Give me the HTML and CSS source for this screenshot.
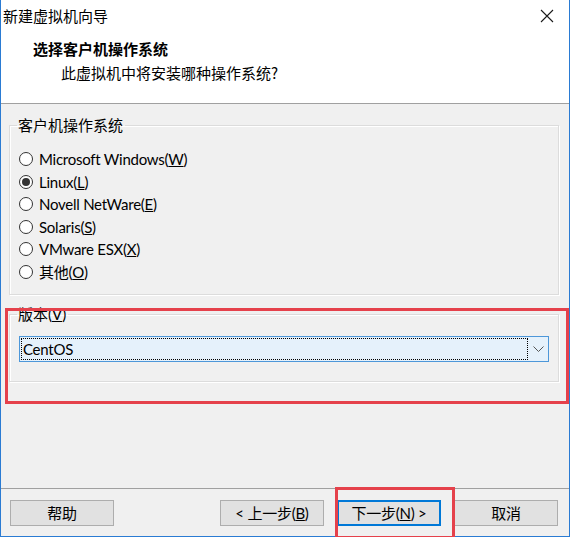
FILE: index.html
```html
<!DOCTYPE html>
<html lang="zh-CN">
<head>
<meta charset="utf-8">
<title>新建虚拟机向导</title>
<link rel="stylesheet" href="styles.css">
</head>
<body>
<div class="window">
  <div class="titlebar">
    <span class="title">新建虚拟机向导</span>
    <span class="close">
      <svg width="14" height="14" viewBox="0 0 14 14"><path d="M1 1 L13 13 M13 1 L1 13" stroke="#1a1a1a" stroke-width="1.1" fill="none"/></svg>
    </span>
  </div>
  <div class="header">
    <div class="h-title">选择客户机操作系统</div>
    <div class="h-sub">此虚拟机中将安装哪种操作系统?</div>
  </div>
  <div class="content">
    <fieldset class="group os-group">
      <legend>客户机操作系统</legend>
      <div class="radios">
        <label class="radio"><span class="dot"></span>Microsoft Windows(<u>W</u>)</label>
        <label class="radio checked"><span class="dot"></span>Linux(<u>L</u>)</label>
        <label class="radio"><span class="dot"></span>Novell NetWare(<u>E</u>)</label>
        <label class="radio"><span class="dot"></span>Solaris(<u>S</u>)</label>
        <label class="radio"><span class="dot"></span>VMware ESX(<u>X</u>)</label>
        <label class="radio"><span class="dot"></span>其他(<u>O</u>)</label>
      </div>
    </fieldset>
    <fieldset class="group ver-group">
      <legend>版本(<u>V</u>)</legend>
      <div class="combo">
        <span class="combo-text"><span class="focus">CentOS</span></span>
        <span class="combo-arrow">
          <svg width="11" height="7" viewBox="0 0 11 7"><path d="M0.5 0.5 L5.5 5.5 L10.5 0.5" stroke="#555" stroke-width="1" fill="none"/></svg>
        </span>
      </div>
    </fieldset>
    <div class="hl hl-version"></div>
  </div>
  <div class="footer">
    <button class="btn">帮助</button>
    <div class="spacer"></div>
    <button class="btn">&lt; 上一步(<u>B</u>)</button>
    <button class="btn default">下一步(<u>N</u>) &gt;</button>
    <button class="btn">取消</button>
    <div class="hl hl-next"></div>
  </div>
</div>
</body>
</html>
```

FILE: styles.css
```css
* { box-sizing: border-box; }
html, body { margin: 0; padding: 0; }
body {
  width: 570px;
  height: 537px;
  font-family: "Noto Sans CJK SC", sans-serif;
  font-size: 15px;
  color: #000;
  background: #fff;
}
.window {
  position: relative;
  width: 570px;
  height: 537px;
  border-left: 1px solid #2a7bd3;
  border-right: 1px solid #2a7bd3;
  border-bottom: 1px solid #2a7bd3;
  display: flex;
  flex-direction: column;
  background: #f0f0f0;
}
.titlebar {
  height: 31px;
  background: #fff;
  display: flex;
  align-items: center;
  justify-content: space-between;
  padding: 0 15px 0 2px;
}
.title {
  font-size: 15px;
  line-height: 20px;
}
.close { display: flex; }
.header {
  height: 73px;
  background: #fff;
  border-bottom: 1px solid #a0a0a0;
  padding: 8px 0 0 32px;
}
.h-title {
  font-weight: bold;
  font-size: 15px;
  line-height: 20px;
}
.h-sub {
  font-size: 15px;
  line-height: 20px;
  margin-top: 4px;
  padding-left: 28px;
}
.content {
  position: relative;
  flex: 1;
  padding: 11px 0 0 8px;
}
.group {
  margin: 0;
  width: 550px;
  border: 1px solid #dcdcdc;
  box-shadow: inset 1px 1px 0 #fff, 1px 1px 0 #fff;
  padding: 0;
}
.group legend {
  margin-left: 7px;
  padding: 0 2px 0 1px;
  font-size: 15px;
  line-height: 20px;
}
.radio, .btn, .combo, .group legend {
  font-family: Lato, "Noto Sans CJK SC", sans-serif;
}
.radio, .btn, .combo {
  letter-spacing: -0.25px;
}
.os-group { height: 180px; }
.radios {
  display: flex;
  flex-direction: column;
  padding: 14px 0 0 9px;
  gap: 2.6px;
}
.radio {
  display: flex;
  align-items: center;
  height: 20px;
  line-height: 20px;
  white-space: nowrap;
}
.dot {
  width: 14px;
  height: 14px;
  border: 1px solid #333;
  border-radius: 50%;
  background: #fff;
  margin-right: 6px;
  display: flex;
  align-items: center;
  justify-content: center;
}
.checked .dot::after {
  content: "";
  width: 8px;
  height: 8px;
  border-radius: 50%;
  background: #333;
}
.ver-group {
  margin-top: 9px;
  height: 78px;
}
.combo {
  margin: 12px 0 0 9px;
  width: 530px;
  height: 26px;
  border: 1px solid #4d97d9;
  background: #e5f1fb;
  display: flex;
  align-items: center;
  padding: 0 0 0 1px;
}
.combo-text {
  flex: 1;
  height: 22px;
  display: flex;
}
.focus {
  flex: 1;
  border: 1px dotted #000;
  line-height: 20px;
  padding-left: 1px;
}
.combo-arrow {
  width: 20px;
  display: flex;
  justify-content: center;
}
.footer {
  position: relative;
  height: 48px;
  border-top: 1px solid #a0a0a0;
  display: flex;
  align-items: flex-start;
  padding: 11px 11px 0 9px;
  gap: 13px;
}
.spacer { flex: 1; }
.btn {
  width: 104px;
  height: 26px;
  background: #e1e1e1;
  border: 1px solid #adadad;
  font-size: 15px;
  line-height: 20px;
  padding: 0;
  color: #000;
}
.btn.default {
  border: 2px solid #0078d7;
}
.hl {
  position: absolute;
  border: 3px solid #e5414b;
}
.hl-version {
  left: 4px;
  top: 204px;
  width: 564px;
  height: 96px;
}
.hl-next {
  left: 334px;
  top: -2px;
  width: 120px;
  height: 52px;
}
```
